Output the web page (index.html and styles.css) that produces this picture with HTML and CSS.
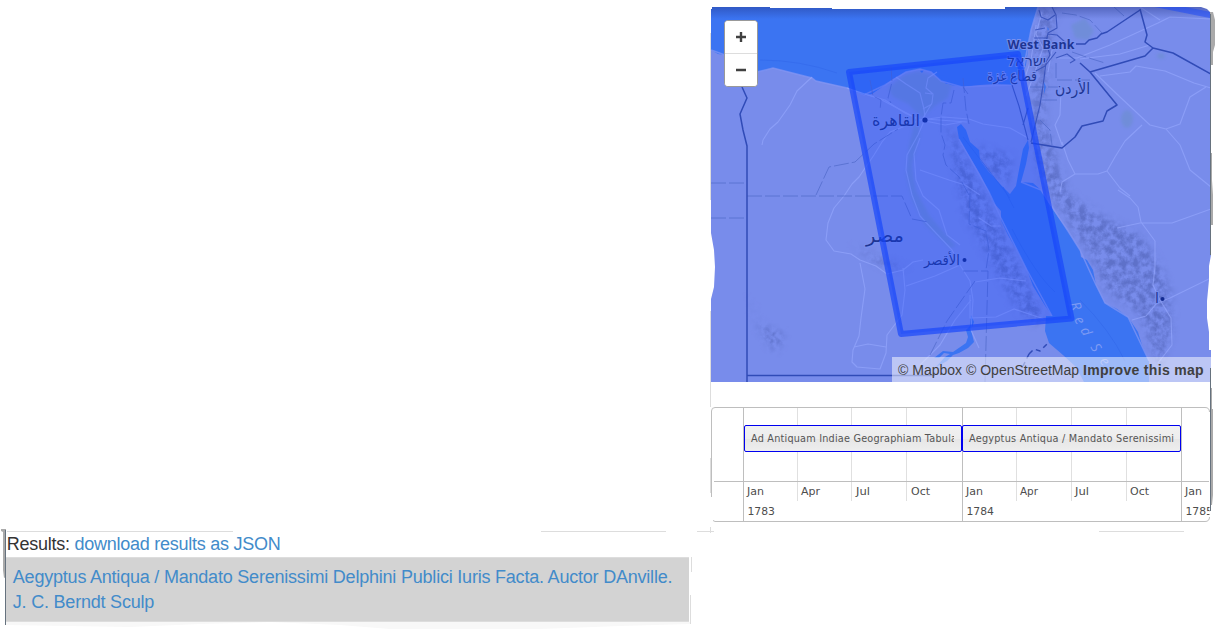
FILE: index.html
```html
<!DOCTYPE html>
<html lang="en">
<head>
<meta charset="utf-8">
<title>Map search results</title>
<link rel="stylesheet" href="styles.css">
</head>
<body>
<main class="page">
  <section class="results">
    <p class="summary">Results: <a href="#">download results as JSON</a></p>
    <a class="result" href="#">Aegyptus Antiqua / Mandato Serenissimi Delphini Publici Iuris Facta. Auctor DAnville.<br>J. C. Berndt Sculp</a>
  </section>
  <aside class="side">
    <div class="map">
      <svg class="canvas" viewBox="711 7 500 375" width="500" height="375">
        <defs>
          <linearGradient id="shade" x1="0" y1="0" x2="0" y2="1"><stop offset="0" stop-color="#203080" stop-opacity=".4"/><stop offset="1" stop-color="#203080" stop-opacity="0"/></linearGradient>
          <filter id="relief" x="-.1" y="-.1" width="1.2" height="1.2" color-interpolation-filters="sRGB"><feGaussianBlur in="SourceGraphic" stdDeviation="4" result="area"/><feTurbulence type="fractalNoise" baseFrequency=".15" numOctaves="4" seed="4"/><feColorMatrix values="0 0 0 0 .27  0 0 0 0 .34  0 0 0 0 .66  0 0 0 2.6 -.85"/><feComposite in2="area" operator="in"/></filter>
          <filter id="soft"><feGaussianBlur stdDeviation="1.5"/></filter>
        </defs>
        <rect x="711" y="7" width="500" height="375" fill="#788ceb"/>
        <g class="vegetation" filter="url(#soft)">
          <path d="M888 88L904 75 918 71 941 78 952 84 948 98 935 106 922 118 908 104 893 97Z"/>
          <path d="M1071 25L1085 18 1094 31 1088 40 1075 38Z"/>
          <ellipse cx="1127" cy="119" rx="6" ry="9"/><ellipse cx="1161" cy="56" rx="4" ry="3"/>
          <path d="M917 112L909 145 906 175 912 200 925 225 950 248 956 246 930 216 916 190 912 165 920 135Z"/>
        </g>
        <g class="hills" filter="url(#relief)">
          <path d="M1038 8L1056 8 1052 40 1048 70 1044 120 1058 165 1070 195 1100 215 1140 235 1160 265 1170 290 1172 330 1160 370 1150 345 1140 315 1105 290 1090 255 1060 210 1042 182 1032 140 1033 60Z"/>
          <path d="M974 146L1012 156 1008 186 985 168ZM945 118L958 143 990 205 1024 275 1044 318 1035 325 1015 305 995 270 965 215Z"/>
          <path d="M746 290L760 325 785 335 775 352 760 330ZM850 245L890 262 910 268 885 268Z"/>
        </g>
        <g class="sea">
          <path d="M711 7V50L718 54 725 55 738 63 757 72 766 70 773 68 785 71 800 75 812 78 816 81 830 84 847 88 855 92 864 95 872 94 885 85 893 79 906 72 920 69 931 72 941 81 951 85 962 87 980 85 995 84 1012 85 1022 76 1026 65 1028 50 1031 30 1037 12 1038 7Z"/>
          <path d="M957 127L961 124 966 130 970 142 979 150 980 160 988 171 1000 184 1010 194 1016 186 1019 170 1023 149 1028 140 1029 148 1026 164 1021 182 1033 183 1041 190 1048 202 1058 217 1068 231 1080 250 1081 257 1087 260 1093 270 1096 285 1105 303 1117 309 1128 317 1138 332 1142 345 1149 361 1149 382H1084L1076 367 1063 355 1049 343 1045 331 1046 316H1052L1044 304 1033 286 1027 270 1016 249 1008 235 1001 220 1001 211 993 202 989 192 980 174 970 157 959 139Z"/>
          <path d="M971 315L974 322 971 330 974 342 968 348 959 353 953 355 947 361 936 367 945 357 950 354 944 353 939 358 934 358 943 351 953 352 966 343 968 337 966 330 970 326Z"/>
          <path d="M939 75L945 76 953 83 946 84ZM920 71L924 70 922 73ZM1047 27L1049 29 1048 31ZM1044 82L1046 87 1044 94Z"/>
        </g>
        <path class="reef" d="M760 60Q800 60 837 73M963 137L1010 198M1003 187L1014 208M1012 229Q1036 275 1055 292M1080 300Q1110 330 1125 361"/>
        <g class="coast">
          <path d="M711 50L725 55 738 63 757 72 773 68 812 78 816 81 847 88 864 95 885 85 906 72 920 69 931 72 941 81 962 87 1012 85 1022 76 1031 30 1038 7"/>
          <path d="M1021 182L1041 190 1068 231 1080 250 1096 285 1105 303 1128 317 1149 361M959 139L989 192 1001 218 1027 270 1052 316"/>
        </g>
        <g class="roads">
          <path d="M812 77L797 91 790 105 778 122 770 129 763 140 762 145M847 88L880 99 897 108 920 120 943 117 969 119 983 124 1010 128 1028 138"/>
          <path d="M896 77L906 84 920 93 924 109 925 119 918 135 907 155 906 170 912 195 920 216 934 231 952 250 960 265 970 281 973 300 971 330 979 348M920 138L914 154 916 180 923 196 939 210 947 235 960 245M923 118L932 103 933 94 926 88 928 78 937 72M925 93L932 94M923 109L932 104M925 119L967 122M865 94L885 100 905 113 918 119M925 121L945 125 962 122"/>
          <path d="M920 170L949 180 965 185 980 195M918 121L890 132 882 142 874 155 859 177 852 184 844 196 834 208 828 223 826 240 834 251 851 254 860 260 876 266 887 274 903 270 913 262 923 260M860 263L865 289 861 318 859 336 853 350 852 362 857 367 880 369 886 353 887 335 902 315 905 290 903 268M854 347L868 344 886 347"/>
          <path d="M906 286L935 276 960 265M979 218L991 226 1001 226M975 282L1000 278 1026 281M970 295L970 318 996 317 1014 309 1044 319M971 300L955 320 940 345 920 365"/>
          <path d="M1100 76L1130 72 1136 66 1165 71 1194 83 1211 88M1095 73L1120 97 1150 125 1166 129 1180 145 1190 170 1211 187M1142 125L1125 141 1115 157 1107 171 1098 174 1075 174 1062 182 1060 192M1107 171L1120 188 1130 196M1118 190L1130 198 1138 207 1141 222 1155 241 1155 267 1153 285 1160 300 1171 318 1172 345 1158 363M1062 142L1068 160 1075 174M1117 228L1140 223 1172 223 1211 209M1132 320L1146 316 1157 303 1170 298 1211 278M1061 90L1060 115 1055 125 1062 145"/>
          <path d="M1056 58L1077 58 1110 45 1158 23 1170 17 1211 19M1080 59L1120 54 1150 45M1160 20L1140 7M1206 87L1190 97 1180 124 1166 129M1036 25L1034 40 1031 60 1024 80M1042 12L1036 34 1043 48 1035 72 1026 96M1052 50L1048 72"/>
        </g>
        <g class="dash">
          <path d="M711 183H747M711 218H747M747 196H902L912 219 928 222M816 195L829 167 855 162 874 144 898 129M870 80L873 96 881 100 880 110M891 66L892 82 888 98 891 103M954 90L951 103H943L941 117V133L945 145 943 155 946 165 959 177 969 195M963 78L966 110 969 124M963 87L968 94M970 193L969 224 986 231 989 250 986 270M963 271H988L985 382M975 281L947 321 930 355"/>
          <path d="M1030 87H1058M1056 63V80H1092M1072 52L1092 59 1105 63M1042 100H1060M1040 120L1050 130 1052 145M1062 13L1076 15 1090 20 1102 33M1114 7L1124 16"/>
        </g>
        <g class="border">
          <path d="M742 87L747 98 740 114 743 130 747 146V382M747 375.500H935"/>
          <path d="M1076 44L1085 44 1089 40 1097 38 1101 34 1107 32 1140 10M1090 72L1145 56 1153 48 1173 53 1211 74M1140 9L1147 35 1145 42 1149 45 1153 48M1080 63L1090 72 1117 105 1107 111 1103 121 1082 126 1075 137 1062 148 1031 143"/>
          <path class="thin" d="M1012 85L1019 106 1028 140M1031 142L1040 105 1044 79 1046 62 1050 55 1046 42 1048 33 1057 28 1056 15 1052 7M1055 15L1048 20 1041 17 1039 10M1035 30L1045 28M1034 38H1048M1048 34L1057 35 1065 42 1070 50M1028 108L1023 125M1034 72L1045 66 1056 52M1056 58L1067 54 1075 60 1070 63"/>
          <path class="crossing" d="M1029 354L1034 349 1040 351 1049 342M1029 354L1023 366"/>
        </g>
        <rect x="711" y="7" width="500" height="12" fill="url(#shade)"/>
        <g class="places">
          <text x="1007.500" y="49" textLength="67" class="bold">West Bank</text>
          <text x="1007" y="66" textLength="39" lengthAdjust="spacingAndGlyphs">ישראל</text>
          <text x="987" y="81" textLength="50" lengthAdjust="spacingAndGlyphs">قطاع غزة</text>
          <text x="1055" y="94" textLength="35" lengthAdjust="spacingAndGlyphs" class="big">الأردن</text>
          <text x="872" y="126" textLength="48" lengthAdjust="spacingAndGlyphs" class="big">القاهرة</text>
          <text x="866" y="242" textLength="38" lengthAdjust="spacingAndGlyphs" class="country">مصر</text>
          <text x="924" y="265" textLength="36" lengthAdjust="spacingAndGlyphs">الأقصر</text>
          <text x="1155" y="303">ا</text>
          <circle cx="925" cy="120" r="2.600"/><circle cx="964.500" cy="260" r="2"/><circle cx="1162.500" cy="299" r="2"/>
        </g>
        <g class="water-name"><text transform="translate(1070 304) rotate(68)">R</text><text transform="translate(1074 319) rotate(65)">e</text><text transform="translate(1080 330) rotate(62)">d</text><text transform="translate(1090 347) rotate(58)">S</text><text transform="translate(1099 361) rotate(55)">e</text></g>
        <path class="extent" d="M849 72L1018 54 1071.500 318.500 901 334Z"/>
        <path class="extent-line" d="M1155 4L1213 15.500"/>
        <path fill="#fff" d="M711 7H712V9H711ZM770 7H1005V9H832V8H770ZM1201 7H1211V13L1207 9ZM711 233L714 250 715 267 714 287 711 299ZM1211 255L1209 266 1209 280 1207 301 1207 318 1209 332V350H1211Z"/>
      </svg>
      <div class="zoom">
        <button aria-label="Zoom in"><svg width="12" height="12"><path d="M6 1V11M1 6H11"/></svg></button>
        <button aria-label="Zoom out"><svg width="12" height="12"><path d="M1 6H11"/></svg></button>
      </div>
      <div class="credit">© Mapbox © OpenStreetMap <b>Improve this map</b></div>
    </div>
    <div class="timeline">
      <svg viewBox="711 407 500 115" width="500" height="115">
        <defs>
          <linearGradient id="bar" x1="0" y1="0" x2="0" y2="1"><stop offset="0" stop-color="#f1f1f1"/><stop offset=".5" stop-color="#ededed"/><stop offset=".52" stop-color="#e6e6e6"/><stop offset="1" stop-color="#eee"/></linearGradient>
          <clipPath id="label"><rect x="749" y="428" width="205" height="20"/></clipPath>
          <clipPath id="panel"><rect x="711" y="407" width="498.500" height="115"/></clipPath>
        </defs>
        <path class="minor" d="M797.500 408V501M851.500 408V501M906.500 408V501M1016.500 408V501M1071.500 408V501M1126.500 408V501"/>
        <path class="major" d="M743.500 408V521M962.500 408V521M1181.500 408V521M714 481.500H1209M711.500 497V411Q711.500 407.500 715 407.500H1205Q1209.500 407.500 1209.500 412M713 520.500L715 521.500H1205Q1209.500 521.500 1209.500 517"/>
        <rect class="event" x="744.500" y="425.500" width="217" height="26" rx="1.500"/>
        <rect class="event" x="962.500" y="425.500" width="218" height="26" rx="1.500"/>
        <g class="labels">
          <text clip-path="url(#label)" x="751" y="442" textLength="206">Ad Antiquam Indiae Geographiam Tabula</text>
          <text x="969" y="442" textLength="205">Aegyptus Antiqua / Mandato Serenissimi</text>
        </g>
        <g class="labels axis" clip-path="url(#panel)">
          <text x="747" y="495" textLength="17" lengthAdjust="spacingAndGlyphs">Jan</text><text x="801" y="495" textLength="19" lengthAdjust="spacingAndGlyphs">Apr</text><text x="856" y="495" textLength="14" lengthAdjust="spacingAndGlyphs">Jul</text><text x="911" y="495" textLength="19" lengthAdjust="spacingAndGlyphs">Oct</text>
          <text x="966" y="495" textLength="17" lengthAdjust="spacingAndGlyphs">Jan</text><text x="1020" y="495" textLength="18" lengthAdjust="spacingAndGlyphs">Apr</text><text x="1075" y="495" textLength="14" lengthAdjust="spacingAndGlyphs">Jul</text><text x="1130" y="495" textLength="19" lengthAdjust="spacingAndGlyphs">Oct</text><text x="1185" y="495" textLength="17" lengthAdjust="spacingAndGlyphs">Jan</text>
          <text x="747.500" y="515" textLength="27.500" lengthAdjust="spacingAndGlyphs">1783</text><text x="966.500" y="515" textLength="27.500" lengthAdjust="spacingAndGlyphs">1784</text><text x="1185.500" y="515" textLength="27.500" lengthAdjust="spacingAndGlyphs">1785</text>
        </g>
      </svg>
    </div>
  </aside>
</main>
<svg class="edges" width="1216" height="630">
  <path stroke="#ddd" d="M7 531.500H233M541 531.500H666M697 531.500H714M1099 531.500H1184M710.500 33V200M710.500 311V407M710.500 458V493M710.500 527V533M691.500 557V572M690.500 595V624"/>
  <path fill="#aaa" d="M1210 12H1213L1215 20V45L1213 52V65H1210ZM1210 153H1212V180L1213 195V225H1211V255H1210ZM1 529H6V577L4 578 3 570V532L1 531ZM1211 388H1212V409H1213V495L1212 505H1211Z"/>
  <path stroke="#66727e" d="M5.500 530V625M1210.500 14V255M1210.500 368V511"/>
  <path fill="#f8f8f8" d="M6 622H690V624L620 626 540 629H390L340 625 270 622 200 624 130 627 6 625Z"/>
</svg>
</body>
</html>
```
FILE: styles.css
```css
body { margin: 0; background: #fff; font-family: "Liberation Sans", Arial, sans-serif; overflow: hidden; }
.page { display: grid; grid-template-columns: 684px 500px; column-gap: 21px; padding-left: 6px; height: 630px; box-sizing: border-box; }
.results { padding-top: 532px; font-size: 18px; line-height: 25px; color: #333; letter-spacing: -.21px; }
.results a { color: #428bca; text-decoration: none; }
.summary { margin: 0; padding-left: .7px; height: 25px; letter-spacing: -.25px; }
.result { display: block; height: 65px; padding: 7px 0 0 6.8px; margin-right: 1px; background: #d3d3d3; border-top: 1px solid #ddd; border-bottom: 1px solid #ddd; white-space: nowrap; box-sizing: border-box; }
.side { padding-top: 7px; }
.map { position: relative; height: 375px; }
svg { display: block; }
.sea { fill: #3b74f2; }
.vegetation { fill: #688fc5; opacity: .45; }
.hills { opacity: .5; }
.coast, .roads, .dash, .border, .reef { fill: none; }
.coast { stroke: #8697f4; stroke-width: 1.5; opacity: .7; }
.roads { stroke: #98aaff; stroke-width: 1.1; opacity: .6; stroke-linejoin: round; }
.dash { stroke: #526bcb; stroke-width: 1; stroke-dasharray: 15 3; opacity: .75; }
.border { stroke: #304bb7; stroke-width: 1.5; stroke-linejoin: round; }
.thin { stroke-width: 1.1; opacity: .8; }
.crossing { stroke-dasharray: 5 4; }
.reef { stroke: #336aeb; stroke-width: 1; opacity: .7; }
.places { fill: #1e3593; font: 14px "Noto Sans", "DejaVu Sans", sans-serif; stroke: #7890ef; stroke-width: 2px; paint-order: stroke; }
.places circle { stroke: none; fill: #132b91; }
.places .bold { font-weight: 700; font-size: 12.5px; }
.places .big { font-size: 16px; }
.places .country { font-size: 19px; }
.water-name { fill: #7d9af4; font: italic 14px "Open Sans", "Noto Sans", sans-serif; }
.extent { fill: #0f40ff; fill-opacity: .27; stroke: #1645fa; stroke-width: 6; stroke-opacity: .68; stroke-linejoin: round; }
.extent-line { fill: none; stroke: #1645fa; stroke-width: 6; opacity: .5; }
.zoom { position: absolute; left: 13px; top: 13px; width: 32px; height: 65px; border: 1px solid #999; border-radius: 4px; background: #fff; overflow: hidden; }
.zoom button { display: flex; align-items: center; justify-content: center; box-sizing: border-box; width: 32px; height: 32px; padding: 0; border: 0; background: #fff; }
.zoom button + button { height: 33px; border-top: 1px solid #ddd; }
.zoom path { stroke: #404040; stroke-width: 2.4; }
.credit { position: absolute; right: 0; bottom: 0; width: 319px; height: 25px; box-sizing: border-box; padding-right: 7px; background: rgba(255,255,255,.5); color: #404040; font-size: 14px; line-height: 26px; text-align: right; white-space: nowrap; }
.credit b { letter-spacing: .32px; }
.timeline { padding-top: 25px; }
.minor, .major { fill: none; stroke-width: 1; }
.minor { stroke: #e0e0e0; }
.major { stroke: #bebebe; }
.event { fill: url(#bar); stroke: #0000f0; stroke-width: 1; }
.labels { fill: #555; font: 9.7px "DejaVu Sans", Verdana, sans-serif; }
.axis { fill: #4d4d4d; }
.edges { position: absolute; left: 0; top: 0; fill: none; pointer-events: none; }
```
